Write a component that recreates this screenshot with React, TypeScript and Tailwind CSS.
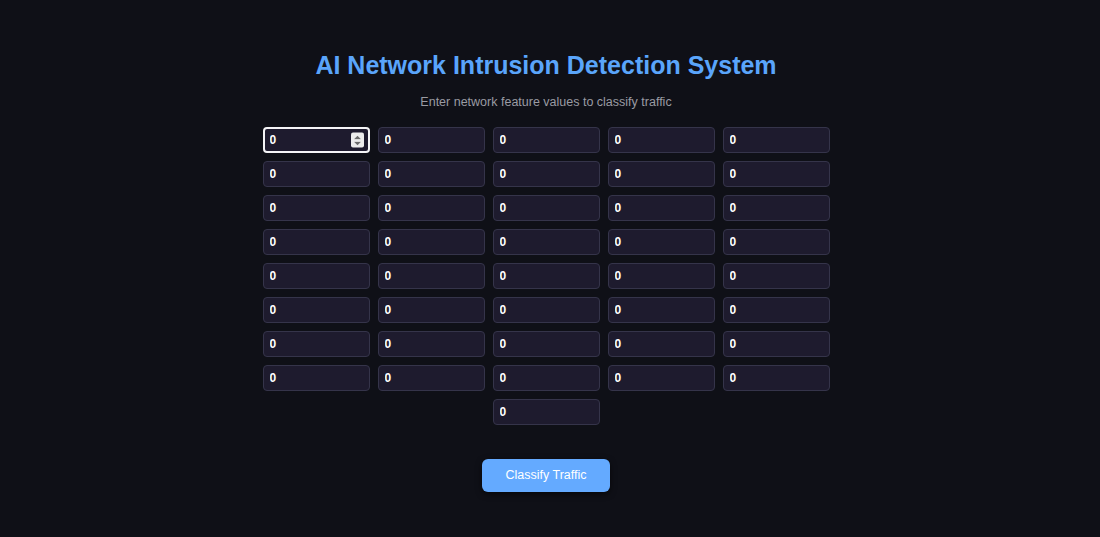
import { useState } from "react";

const FEATURE_COUNT = 41;

function NumberSpinner() {
  return (
    <span
      aria-hidden
      className="pointer-events-none absolute right-[6px] top-1/2 flex h-[15px] w-[13px] -translate-y-1/2 flex-col items-center justify-center gap-[2px] rounded-[2px] bg-[#ececec]"
    >
      <svg viewBox="0 0 8 4" className="h-[4px] w-[7px]">
        <path d="M0 4 L4 0 L8 4 Z" fill="#6b6b6b" />
      </svg>
      <svg viewBox="0 0 8 4" className="h-[4px] w-[7px]">
        <path d="M0 0 L4 4 L8 0 Z" fill="#6b6b6b" />
      </svg>
    </span>
  );
}

function FeatureInput({
  value,
  active,
  onChange,
}: {
  value: string;
  active: boolean;
  onChange: (v: string) => void;
}) {
  return (
    <div className="relative h-[26px] w-[107px]">
      <input
        type="number"
        value={value}
        onChange={(e) => onChange(e.target.value)}
        className={
          active
            ? "h-full w-full appearance-none rounded-[4px] border-2 border-[#f4f4f6] bg-[#1e1b2e] px-[5px] text-[12px] font-bold text-white outline-none [&::-webkit-inner-spin-button]:appearance-none"
            : "h-full w-full appearance-none rounded-[4px] border border-[#35344a] bg-[#1e1b2e] px-[6px] text-[12px] font-bold text-white outline-none [&::-webkit-inner-spin-button]:appearance-none"
        }
      />
      {active ? <NumberSpinner /> : null}
    </div>
  );
}

export default function App() {
  const [values, setValues] = useState<string[]>(
    Array.from({ length: FEATURE_COUNT }, () => "0")
  );

  return (
    <main className="min-h-screen bg-[#0f1017] pr-[8px] font-['Liberation_Sans',Arial,sans-serif]">
      <div className="flex flex-col items-center pt-[50px]">
        <h1 className="text-[25px] font-bold leading-[30px] text-[#5aa5fb]">
          AI Network Intrusion Detection System
        </h1>
        <p className="mt-[14px] text-[12.5px] leading-[16px] text-[#9a9ba3]">
          Enter network feature values to classify traffic
        </p>

        <div className="mt-[17px] flex w-[567px] flex-wrap justify-center gap-2">
          {values.map((v, i) => (
            <FeatureInput
              key={i}
              value={v}
              active={i === 0}
              onChange={(next) =>
                setValues((prev) => prev.map((p, j) => (j === i ? next : p)))
              }
            />
          ))}
        </div>

        <button
          type="button"
          className="mt-[34px] h-[33px] w-[128px] rounded-[6px] bg-[#64aaff] text-[12.5px] text-white shadow-[0_2px_6px_rgba(0,0,0,0.6)]"
        >
          Classify Traffic
        </button>
      </div>
    </main>
  );
}
